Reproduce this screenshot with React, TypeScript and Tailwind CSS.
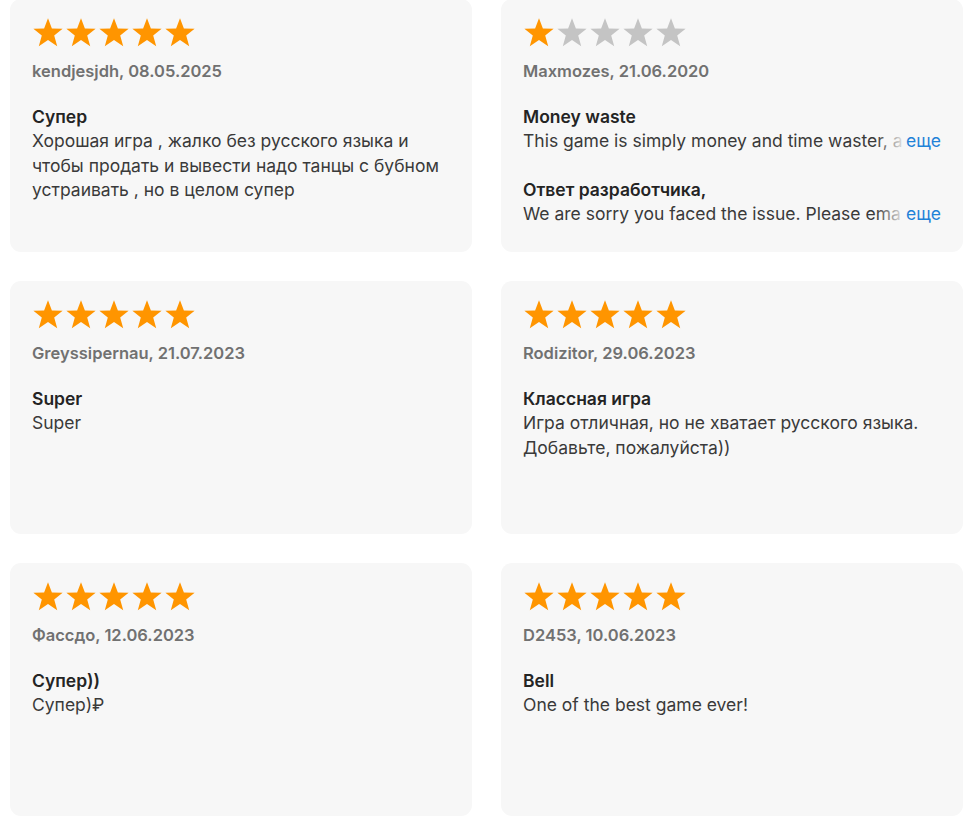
import React from "react";

type Review = {
    rating: number;
    author: string;
    date: string;
    title: string;
    body: string;
    clamp?: boolean;
    reply?: string;
};

const reviews: Review[] = [
    {
        rating: 5,
        author: "kendjesjdh",
        date: "08.05.2025",
        title: "Супер",
        body: "Хорошая игра , жалко без русского языка и чтобы продать и вывести надо танцы с бубном устраивать , но в целом супер",
    },
    {
        rating: 1,
        author: "Maxmozes",
        date: "21.06.2020",
        title: "Money waste",
        body: "This game is simply money and time waster, a",
        clamp: true,
        reply: "We are sorry you faced the issue. Please ema",
    },
    { rating: 5, author: "Greyssipernau", date: "21.07.2023", title: "Super", body: "Super" },
    {
        rating: 5,
        author: "Rodizitor",
        date: "29.06.2023",
        title: "Классная игра",
        body: "Игра отличная, но не хватает русского языка. Добавьте, пожалуйста))",
    },
    { rating: 5, author: "Фассдо", date: "12.06.2023", title: "Супер))", body: "Супер)₽" },
    { rating: 5, author: "D2453", date: "10.06.2023", title: "Bell", body: "One of the best game ever!" },
];

const Star = ({ filled }: { filled: boolean }) => (
    <svg width="32" height="31" viewBox="0 0 32 31" className="shrink-0">
        <path
            d="M16 1.2 L19.9 11.4 L30.6 11.7 L22.2 18.5 L25.2 29.2 L16 22.9 L6.8 29.2 L9.8 18.5 L1.4 11.7 L12.1 11.4 Z"
            fill={filled ? "#ff9500" : "#c4c4c4"}
        />
    </svg>
);

// one line that fades out before a blue "еще"
const ClampedLine = ({ text }: { text: string }) => (
    <div className="flex pr-[4px] text-[17.5px] leading-[24.5px]">
        <div className="relative min-w-0 flex-1 overflow-hidden whitespace-nowrap text-[#3a3a3a]">
            {text}
            <span className="absolute right-0 top-0 h-full w-[30px] bg-gradient-to-r from-[#f7f7f7]/0 to-[#f7f7f7]" />
        </div>
        <span className="shrink-0 text-[#1f82d8]">еще</span>
    </div>
);

const ReviewCard = ({ review }: { review: Review }) => (
    <div className="h-[253px] rounded-[11px] bg-[#f7f7f7] pl-[22px] pr-[18px] pt-[18px]">
        <div className="flex gap-[1px]">
            {[0, 1, 2, 3, 4].map((i) => (
                <Star key={i} filled={i < review.rating} />
            ))}
        </div>
        <div className="mt-[13px] text-[16.5px] font-semibold leading-[20px] text-[#717171]">
            {review.author}, {review.date}
        </div>
        <div className="mt-[24px] text-[17.5px] font-semibold leading-[24px] text-[#242424]">{review.title}</div>
        {review.clamp ? (
            <ClampedLine text={review.body} />
        ) : (
            <p className="text-[17.5px] leading-[24.5px] text-[#3a3a3a]">{review.body}</p>
        )}
        {review.reply && (
            <>
                <div className="mt-[24.5px] text-[17.5px] font-semibold leading-[24px] text-[#242424]">
                    Ответ разработчика,
                </div>
                <ClampedLine text={review.reply} />
            </>
        )}
    </div>
);

export default function App() {
    return (
        <div
            className="min-h-screen w-[974px] bg-white"
            style={{ fontFamily: "Inter, 'Noto Sans', sans-serif" }}
        >
            <div className="-mt-px grid grid-cols-[462px_462px] gap-x-[29px] gap-y-[29px] pl-[10px]">
                {reviews.map((r) => (
                    <ReviewCard key={r.author} review={r} />
                ))}
            </div>
        </div>
    );
}
